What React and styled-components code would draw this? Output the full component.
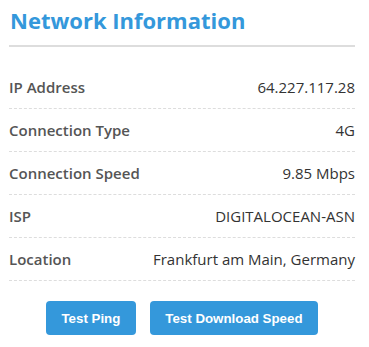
import styled, { createGlobalStyle } from "styled-components"

const Global = createGlobalStyle`
body {
  margin: 0;
  background: #fff;
  font-family: "Open Sans", "Noto Sans", sans-serif;
}
`

const Panel = styled.div`
width: 346px;
margin: 0 9px;
`

const Title = styled.h2`
margin: 0;
padding: 5px 0 10px 1px;
font-size: 22px;
font-weight: 700;
color: #3498db;
border-bottom: 2px solid #ddd;
`

const List = styled.div`
margin-top: 19px;
`

const Row = styled.div`
display: flex;
justify-content: space-between;
align-items: center;
padding: 11px 0;
line-height: 20px;
border-bottom: 1px dashed #ddd;
font-size: 15px;
`

const Label = styled.span`
font-weight: 600;
color: #555;
`

const Value = styled.span`
color: #333;
`

const Actions = styled.div`
display: flex;
justify-content: center;
gap: 14px;
margin-top: 20px;
`

const Button = styled.button`
height: 34px;
padding: 0 15.5px;
border: none;
border-radius: 4px;
background: #3498db;
color: #fff;
font-family: "Liberation Sans", Arial, sans-serif;
font-weight: 700;
font-size: 13.3px;
cursor: pointer;
`

const rows = [
  ["IP Address", "64.227.117.28"],
  ["Connection Type", "4G"],
  ["Connection Speed", "9.85 Mbps"],
  ["ISP", "DIGITALOCEAN-ASN"],
  ["Location", "Frankfurt am Main, Germany"],
]

export default function App() {
  return (
    <Panel>
      <Global />
      <Title>Network Information</Title>
      <List>
        {rows.map(([k, v]) => (
          <Row key={k}>
            <Label>{k}</Label>
            <Value>{v}</Value>
          </Row>
        ))}
      </List>
      <Actions>
        <Button>Test Ping</Button>
        <Button>Test Download Speed</Button>
      </Actions>
    </Panel>
  )
}
